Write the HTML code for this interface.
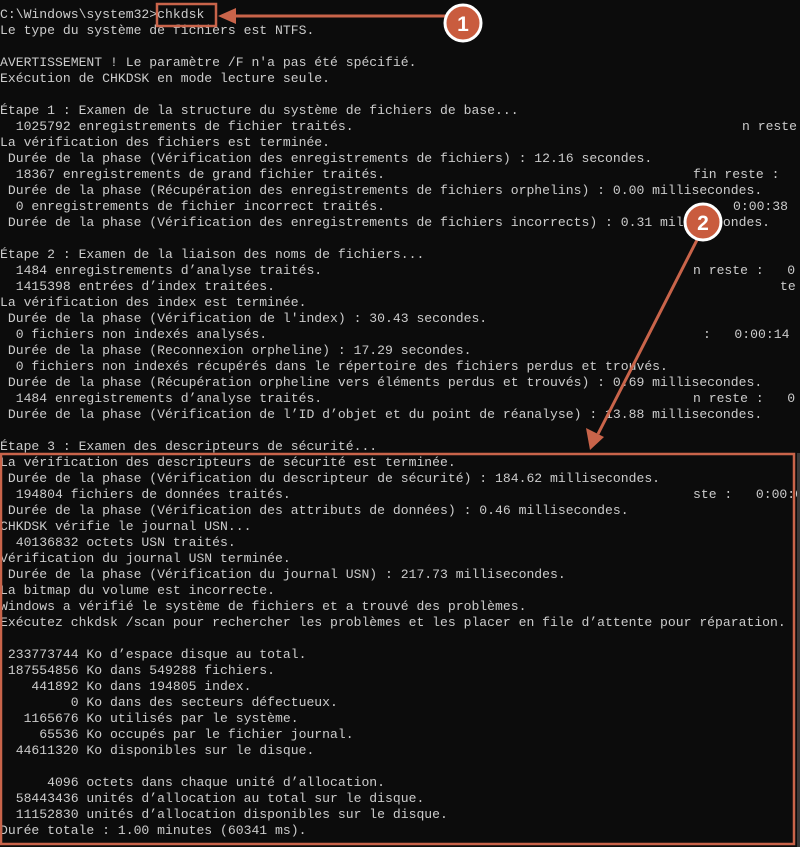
<!DOCTYPE html>
<html><head><meta charset="utf-8"><style>
html,body{margin:0;padding:0;background:#0c0c0c;width:800px;height:847px;overflow:hidden}
pre{margin:0;position:absolute;left:0;top:7px;font-family:"Liberation Mono",monospace;font-size:13.1px;line-height:16px;color:#cccccc;white-space:pre}
pre span{position:absolute}
svg{position:absolute;left:0;top:0}
</style></head><body>
<pre>C:\Windows\system32>chkdsk
Le type du système de fichiers est NTFS.

AVERTISSEMENT ! Le paramètre /F n'a pas été spécifié.
Exécution de CHKDSK en mode lecture seule.

Étape 1 : Examen de la structure du système de fichiers de base...
  1025792 enregistrements de fichier traités.<span style="left:742px">n reste</span>
La vérification des fichiers est terminée.
 Durée de la phase (Vérification des enregistrements de fichiers) : 12.16 secondes.
  18367 enregistrements de grand fichier traités.<span style="left:693px">fin reste :</span>
 Durée de la phase (Récupération des enregistrements de fichiers orphelins) : 0.00 millisecondes.
  0 enregistrements de fichier incorrect traités.<span style="left:733px">0:00:38</span>
 Durée de la phase (Vérification des enregistrements de fichiers incorrects) : 0.31 millisecondes.

Étape 2 : Examen de la liaison des noms de fichiers...
  1484 enregistrements d’analyse traités.<span style="left:693px">n reste :   0</span>
  1415398 entrées d’index traitées.<span style="left:780px">te</span>
La vérification des index est terminée.
 Durée de la phase (Vérification de l'index) : 30.43 secondes.
  0 fichiers non indexés analysés.<span style="left:703px">:   0:00:14</span>
 Durée de la phase (Reconnexion orpheline) : 17.29 secondes.
  0 fichiers non indexés récupérés dans le répertoire des fichiers perdus et trouvés.
 Durée de la phase (Récupération orpheline vers éléments perdus et trouvés) : 0.69 millisecondes.
  1484 enregistrements d’analyse traités.<span style="left:693px">n reste :   0</span>
 Durée de la phase (Vérification de l’ID d’objet et du point de réanalyse) : 13.88 millisecondes.

Étape 3 : Examen des descripteurs de sécurité...
La vérification des descripteurs de sécurité est terminée.
 Durée de la phase (Vérification du descripteur de sécurité) : 184.62 millisecondes.
  194804 fichiers de données traités.<span style="left:693px">ste :   0:00:0</span>
 Durée de la phase (Vérification des attributs de données) : 0.46 millisecondes.
CHKDSK vérifie le journal USN...
  40136832 octets USN traités.
Vérification du journal USN terminée.
 Durée de la phase (Vérification du journal USN) : 217.73 millisecondes.
La bitmap du volume est incorrecte.
Windows a vérifié le système de fichiers et a trouvé des problèmes.
Exécutez chkdsk /scan pour rechercher les problèmes et les placer en file d’attente pour réparation.

 233773744 Ko d’espace disque au total.
 187554856 Ko dans 549288 fichiers.
    441892 Ko dans 194805 index.
         0 Ko dans des secteurs défectueux.
   1165676 Ko utilisés par le système.
     65536 Ko occupés par le fichier journal.
  44611320 Ko disponibles sur le disque.

      4096 octets dans chaque unité d’allocation.
  58443436 unités d’allocation au total sur le disque.
  11152830 unités d’allocation disponibles sur le disque.
Durée totale : 1.00 minutes (60341 ms).</pre>
<svg width="800" height="847" viewBox="0 0 800 847">
<rect x="797" y="453" width="3" height="394" fill="#3a3a3a"/>
<rect x="157" y="4" width="59" height="22" fill="none" stroke="#c9644a" stroke-width="2.5"/>
<line x1="446" y1="16" x2="232" y2="16" stroke="#c9644a" stroke-width="3"/>
<polygon points="218,16 236,8 236,24" fill="#c9644a"/>
<circle cx="463" cy="23" r="18" fill="#c95c3e" stroke="#fff" stroke-width="3"/>
<text x="463" y="31" text-anchor="middle" font-family="Liberation Sans, sans-serif" font-weight="bold" font-size="21" fill="#fff">1</text>
<rect x="1" y="454" width="793" height="390" fill="none" stroke="#c9644a" stroke-width="2.5"/>
<line x1="698" y1="238" x2="598" y2="434" stroke="#c9644a" stroke-width="3"/>
<polygon points="590,450 586,428 604,437" fill="#c9644a"/>
<circle cx="703" cy="222" r="18" fill="#c95c3e" stroke="#fff" stroke-width="3"/>
<text x="703" y="230" text-anchor="middle" font-family="Liberation Sans, sans-serif" font-weight="bold" font-size="21" fill="#fff">2</text>
</svg>
</body></html>
